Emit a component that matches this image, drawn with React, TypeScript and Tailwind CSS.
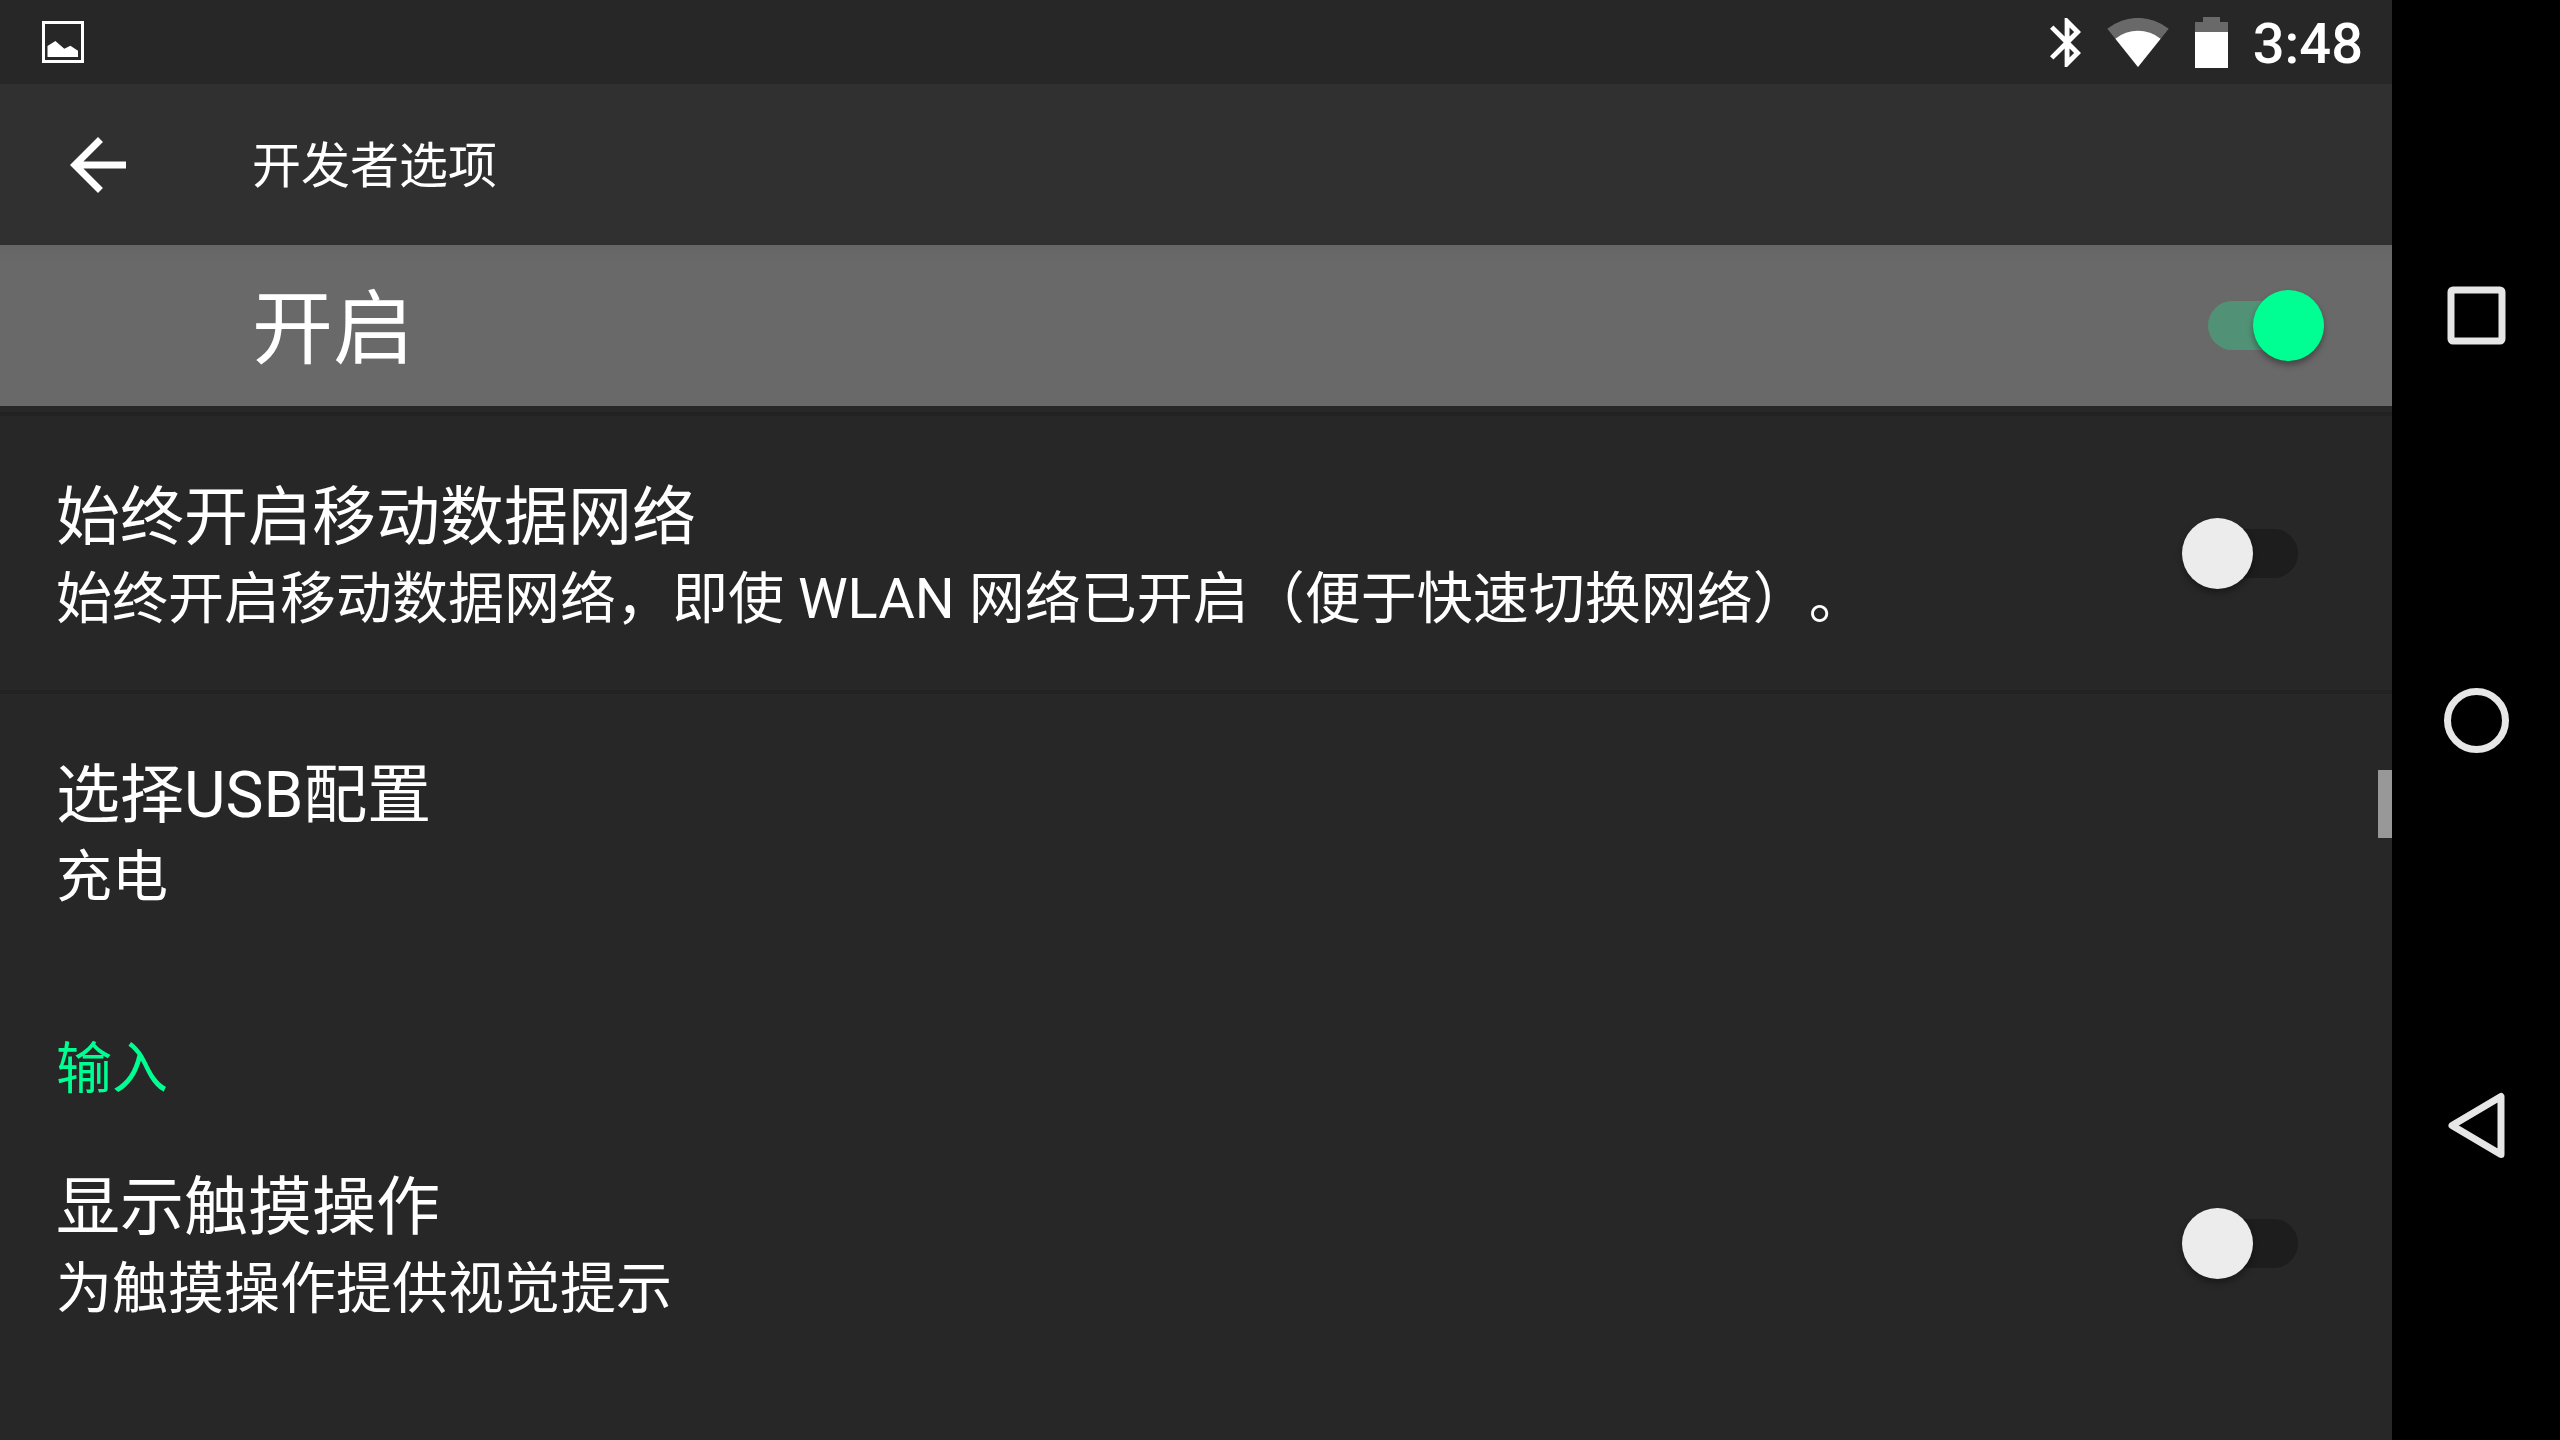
import { useState } from "react";

type SwitchProps = {
  id: string;
  checked: boolean;
  onChange: (checked: boolean) => void;
};

function Switch({ id, checked, onChange }: SwitchProps) {
  return (
    <input
      id={id}
      type="checkbox"
      role="switch"
      checked={checked}
      onChange={(event) => onChange(event.target.checked)}
      className="grid h-[71px] w-[116px] shrink-0 cursor-pointer appearance-none items-center before:h-[49px] before:rounded-full before:bg-[#1d1d1d] before:[grid-area:1/1] after:size-[71px] after:rounded-full after:bg-[#ececec] after:shadow-[0_4px_6px_rgba(0,0,0,0.35)] after:[grid-area:1/1] checked:before:bg-[#519276] checked:after:justify-self-end checked:after:bg-[#00ff92]"
    />
  );
}

type PreferenceProps = {
  id: string;
  title: string;
  summary: string;
  checked?: boolean;
  onChange?: (checked: boolean) => void;
};

function Preference({ id, title, summary, checked, onChange }: PreferenceProps) {
  const text = (
    <>
      <span className="block text-[64px] leading-[88px]">{title}</span>
      <span className="block text-[56px] leading-[74px]">{summary}</span>
    </>
  );

  if (checked === undefined || !onChange) {
    return (
      <button type="button" className="block w-full px-14 pt-[58px] pb-[54px] text-left">
        {text}
      </button>
    );
  }

  return (
    <div className="flex items-center gap-14 py-[54px] pr-[94px] pl-14">
      <label htmlFor={id} className="min-w-0 flex-1 pt-1">
        {text}
      </label>
      <Switch id={id} checked={checked} onChange={onChange} />
    </div>
  );
}

function StatusBar() {
  return (
    <div className="flex h-[84px] items-center bg-[#272727] pr-[29px] pl-[42px]">
      <svg className="size-[42px]" viewBox="0 0 42 42" fill="none">
        <rect x="1.5" y="1.5" width="39" height="39" stroke="white" strokeWidth="3" />
        <path d="M5.5 25 13.4 20 22.3 27.7 28.4 24.7 36 29.7V36H5.5Z" fill="white" />
      </svg>
      <div className="ml-auto flex items-center">
        <svg className="h-[49px] w-[31px]" viewBox="5 2 12.71 20" fill="white">
          <path d="M17.71 7.71 12 2h-1v7.59L6.41 5 5 6.41 10.59 12 5 17.59 6.41 19 11 14.41V22h1l5.71-5.71-4.3-4.29 4.3-4.29zM13 5.83l1.88 1.88L13 9.59V5.83zm1.88 10.46L13 18.17v-3.76l1.88 1.88z" />
        </svg>
        <svg className="ml-[26px] h-[49px] w-[62px]" viewBox="0 0 62 49">
          <path d="M31 49 .3 10.7A49 49 0 0 1 61.7 10.7Z" fill="#696969" />
          <path d="M31 49 8.4 20.7A36 36 0 0 1 53.6 20.7Z" fill="white" />
        </svg>
        <svg className="ml-[26px] h-[51px] w-[33px]" viewBox="0 0 33 51">
          <path d="M0 15V5H8V0H25V5H33V15Z" fill="#696969" />
          <path d="M0 15H33V51H0Z" fill="white" />
        </svg>
        <span className="ml-[25px] pt-1 text-[56px] leading-[66px] font-medium">3:48</span>
      </div>
    </div>
  );
}

function NavigationBar() {
  return (
    <nav className="flex w-[168px] shrink-0 flex-col bg-black pt-[113px] pb-28 pl-px">
      <button type="button" aria-label="最近任务" className="flex flex-1 items-center justify-center">
        <svg className="size-[67px]" viewBox="0 0 67 67" fill="none" stroke="#e6e6e6" strokeWidth="7">
          <rect x="8" y="8" width="51" height="51" rx="2" />
        </svg>
      </button>
      <button type="button" aria-label="主屏幕" className="flex flex-1 items-center justify-center">
        <svg className="size-[67px]" viewBox="0 0 67 67" fill="none" stroke="#e6e6e6" strokeWidth="7">
          <circle cx="33.5" cy="33.5" r="29" />
        </svg>
      </button>
      <button type="button" aria-label="返回" className="flex flex-1 items-center justify-center">
        <svg className="size-[67px]" viewBox="0 0 67 67" fill="none" stroke="#e6e6e6" strokeWidth="7">
          <path d="M9 33.5 58 4.5V62.5Z" strokeLinejoin="round" />
        </svg>
      </button>
    </nav>
  );
}

export default function App() {
  const [enabled, setEnabled] = useState(true);
  const [mobileData, setMobileData] = useState(false);
  const [showTouches, setShowTouches] = useState(false);

  return (
    <div className="flex h-screen overflow-hidden bg-[#272727] font-[Roboto,'Noto_Sans_CJK_SC',sans-serif] text-white [text-spacing-trim:space-all]">
      <div className="relative flex min-w-0 flex-1 flex-col">
        <StatusBar />

        <header className="flex h-[161px] shrink-0 items-center bg-[#303030] pl-[70px]">
          <button type="button" aria-label="向上导航" className="w-[182px]">
            <svg className="size-14" viewBox="4 4 16 16" fill="white">
              <path d="M20 11H7.83l5.59-5.59L12 4l-8 8 8 8 1.41-1.41L7.83 13H20v-2z" />
            </svg>
          </button>
          <h1 className="pt-1 text-[49px] leading-[60px]">开发者选项</h1>
        </header>

        <div className="flex h-[161px] shrink-0 items-center justify-between bg-[#696969] bg-linear-to-b from-[#656565] to-[#696969] to-10% pr-[68px] pl-[252px]">
          <label htmlFor="enabled" className="pt-2 text-[81px] leading-[96px]">
            开启
          </label>
          <Switch id="enabled" checked={enabled} onChange={setEnabled} />
        </div>

        <main className="min-h-0 flex-1 overflow-hidden pt-1.5">
          <div className="divide-y-4 divide-[#222222] border-t-4 border-[#222222]">
            <Preference
              id="mobile-data"
              title="始终开启移动数据网络"
              summary="始终开启移动数据网络，即使 WLAN 网络已开启（便于快速切换网络）。"
              checked={mobileData}
              onChange={setMobileData}
            />
            <Preference id="usb" title="选择USB配置" summary="充电" />
          </div>

          <h2 className="px-14 pt-16 text-[56px] leading-[74px] text-[#00ff92]">输入</h2>
          <Preference
            id="show-touches"
            title="显示触摸操作"
            summary="为触摸操作提供视觉提示"
            checked={showTouches}
            onChange={setShowTouches}
          />
        </main>

        {/* scroll position indicator */}
        <div className="absolute top-[770px] right-0 h-[68px] w-3.5 bg-[#989898]" />
      </div>

      <NavigationBar />
    </div>
  );
}
